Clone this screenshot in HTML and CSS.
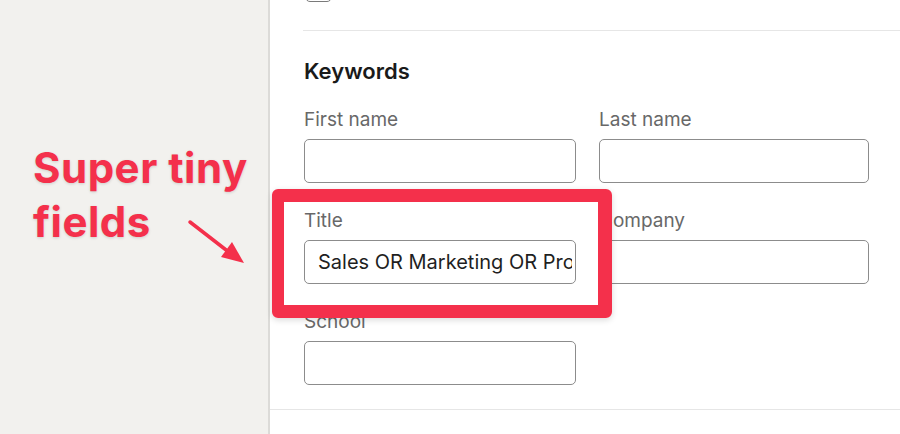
FILE: index.html
```html
<!DOCTYPE html>
<html lang="en">
<head>
<meta charset="utf-8">
<title>Keywords filter</title>
<link rel="stylesheet" href="styles.css">
</head>
<body>
<div class="page">
  <aside class="sidebar">
    <p class="note">Super tiny<br>fields</p>
  </aside>
  <main class="panel">
    <div class="check-row">
      <span class="checkbox"></span>
      <span class="check-label">Hide contacts I've got saved</span>
    </div>
    <div class="divider inset"></div>
    <section class="section">
      <h2 class="heading">Keywords</h2>
      <div class="grid">
        <div class="field">
          <label class="label">First name</label>
          <input class="input" type="text">
        </div>
        <div class="field">
          <label class="label">Last name</label>
          <input class="input" type="text">
        </div>
        <div class="field">
          <label class="label">Title</label>
          <input class="input" type="text" value="Sales OR Marketing OR Product">
        </div>
        <div class="field">
          <label class="label">Company</label>
          <input class="input" type="text">
        </div>
        <div class="field">
          <label class="label">School</label>
          <input class="input" type="text">
        </div>
      </div>
    </section>
    <div class="divider"></div>
  </main>
  <div class="highlight"></div>
  <svg class="arrow" width="900" height="434" viewBox="0 0 900 434">
    <line x1="190" y1="222" x2="230" y2="253" stroke="#f4304b" stroke-width="3.5" stroke-linecap="round"/>
    <polygon points="244,263 221,257 232,242" fill="#f4304b"/>
  </svg>
</div>
</body>
</html>
```
FILE: styles.css
```css
* { box-sizing: border-box; }
html, body { margin: 0; padding: 0; }
body {
  width: 900px;
  height: 434px;
  overflow: hidden;
  font-family: Inter, "Noto Sans", "Liberation Sans", sans-serif;
  background: #fff;
}
.page {
  position: relative;
  display: flex;
  height: 434px;
}
.sidebar {
  width: 270px;
  flex: 0 0 270px;
  background: #f2f1ee;
  border-right: 2px solid #dcdbd8;
  padding: 141px 0 0 33px;
}
.note {
  margin: 0;
  color: #f4304b;
  font-weight: 700;
  font-size: 42px;
  line-height: 54px;
  letter-spacing: 0.5px;
  text-shadow: 0 1px 3px rgba(0,0,0,0.15);
}
.panel {
  flex: 1;
  background: #fff;
  display: flex;
  flex-direction: column;
}
.check-row {
  margin-top: -24px;
  height: 26px;
  display: flex;
  align-items: center;
  gap: 17px;
  padding-left: 35px;
}
.checkbox {
  width: 27px;
  height: 26px;
  border: 1.5px solid #7a7a7a;
  border-radius: 5px;
}
.check-label {
  font-size: 19px;
  color: #222;
}
.divider {
  height: 1px;
  background: #e6e6e6;
}
.divider.inset {
  margin: 28px 0 0 33px;
}
.section {
  padding: 26px 0 24px 34px;
}
.heading {
  margin: 0;
  font-size: 22px;
  line-height: 28px;
  font-weight: 600;
  color: #1a1a1a;
}
.grid {
  margin-top: 23px;
  display: grid;
  grid-template-columns: 272px 270px;
  column-gap: 23px;
  row-gap: 26px;
}
.field {
  display: flex;
  flex-direction: column;
}
.label {
  font-size: 19px;
  line-height: 23px;
  color: #686868;
  margin-bottom: 8px;
}
.input {
  width: 100%;
  height: 44px;
  border: 1.5px solid #8c8c8c;
  border-radius: 5px;
  padding: 0 3px 0 13px;
  font-family: Inter, "Noto Sans", "Liberation Sans", sans-serif;
  font-size: 20px;
  color: #1f1f1f;
  background: #fff;
  outline: none;
}
.highlight {
  position: absolute;
  left: 272px;
  top: 189px;
  width: 340px;
  height: 129px;
  border: solid #f4304b;
  border-width: 13px 14px 13px 12px;
  border-radius: 6px;
  box-shadow: 0 2px 6px rgba(0,0,0,0.15);
}
.arrow {
  position: absolute;
  left: 0;
  top: 0;
  pointer-events: none;
}
```
